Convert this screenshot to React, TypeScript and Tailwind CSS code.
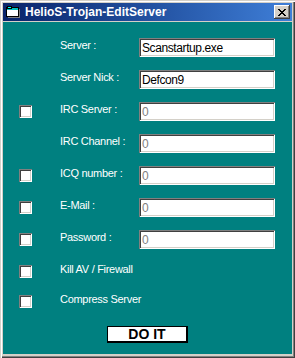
import React from 'react';

interface RowProps {
    label?: string;
    value?: string;
    check?: boolean;
    disabled?: boolean;
}

const sunken =
    'shadow-[inset_1px_1px_#808080,inset_-1px_-1px_#ffffff,inset_2px_2px_#404040,inset_-2px_-2px_#d4d0c8]';

const CheckBox: React.FC = () => <div className={`w-[13px] h-[13px] bg-white ${sunken}`} />;

const Row: React.FC<RowProps> = ({ label, value, check, disabled }) => {
    return (
        <div className="flex items-center h-[19px]">
            <div className="w-[41px] flex items-center">{check && <CheckBox />}</div>
            <div className="w-[79px] self-start pt-[1px] text-white text-[11px] leading-[13px] tracking-[-0.3px] whitespace-nowrap">
                {label}
            </div>
            {value !== undefined && (
                <input
                    readOnly
                    value={value}
                    className={`w-[136px] h-[19px] bg-white pl-[3px] pt-[1px] text-[12px] tracking-[-0.4px] outline-none ${sunken} ${
                        disabled ? 'text-[#808080]' : 'text-black'
                    }`}
                />
            )}
        </div>
    );
};

const TitleIcon = () => (
    <svg width="16" height="16" viewBox="0 0 16 16" shapeRendering="crispEdges">
        <rect x="3" y="5" width="12" height="9" fill="#808080" />
        <rect x="1" y="3" width="12" height="9" fill="#ffffff" stroke="#000000" strokeWidth="1" />
        <rect x="1.5" y="3.5" width="11" height="2" fill="#00c0c0" />
        <rect x="2" y="2" width="4" height="2" fill="#00ffff" stroke="#000" strokeWidth="1" />
    </svg>
);

const CloseButton = () => (
    <div className="w-[16px] h-[14px] bg-[#d4d0c8] flex items-center justify-center shadow-[inset_-1px_-1px_#404040,inset_1px_1px_#ffffff,inset_-2px_-2px_#808080]">
        <svg width="8" height="7" viewBox="0 0 8 7" shapeRendering="crispEdges">
            <path d="M0 0h2v1h-2zM6 0h2v1h-2zM1 1h2v1h-2zM5 1h2v1h-2zM2 2h4v1h-4zM3 3h2v1h-2zM2 4h4v1h-4zM1 5h2v1h-2zM5 5h2v1h-2zM0 6h2v1h-2zM6 6h2v1h-2z" fill="#000" />
        </svg>
    </div>
);

export default function App() {
    return (
        <div
            className="w-[295px] h-[358px] bg-[#d4d0c8] flex flex-col p-[3px] pb-[4px] shadow-[inset_1px_1px_#d4d0c8,inset_2px_2px_#ffffff,inset_-1px_-1px_#404040,inset_-2px_-2px_#808080]"
            style={{ fontFamily: '"Liberation Sans", Arial, sans-serif' }}
        >
            {/* title bar */}
            <div className="h-[18px] flex items-center bg-gradient-to-r from-[#0a246a] to-[#3f7fd8] pl-[2px] pr-[2px]">
                <TitleIcon />
                <span className="ml-[4px] text-white font-bold text-[12px] leading-none">HelioS-Trojan-EditServer</span>
                <div className="ml-auto">
                    <CloseButton />
                </div>
            </div>

            <div className="mt-[1px] flex-1 bg-[#008080] flex flex-col pl-[16px] pt-[16px]">
                <div className="flex flex-col gap-[13px]">
                    <Row label="Server :" value="Scanstartup.exe" />
                    <Row label="Server Nick :" value="Defcon9" />
                    <Row label="IRC Server :" value="0" check disabled />
                    <Row label="IRC Channel :" value="0" disabled />
                    <Row label="ICQ number :" value="0" check disabled />
                    <Row label="E-Mail :" value="0" check disabled />
                    <Row label="Password :" value="0" check disabled />
                    <Row label="Kill AV / Firewall" check />
                </div>
                <div className="mt-[11px]">
                    <Row label="Compress Server" check />
                </div>
                <div className="mt-[15px] self-center -ml-[16px]">
                    <button className="w-[81px] h-[17px] bg-white border border-black border-r-2 border-b-2 text-black font-bold text-[14px] leading-none flex items-center justify-center">
                        DO IT
                    </button>
                </div>
            </div>
        </div>
    );
}
